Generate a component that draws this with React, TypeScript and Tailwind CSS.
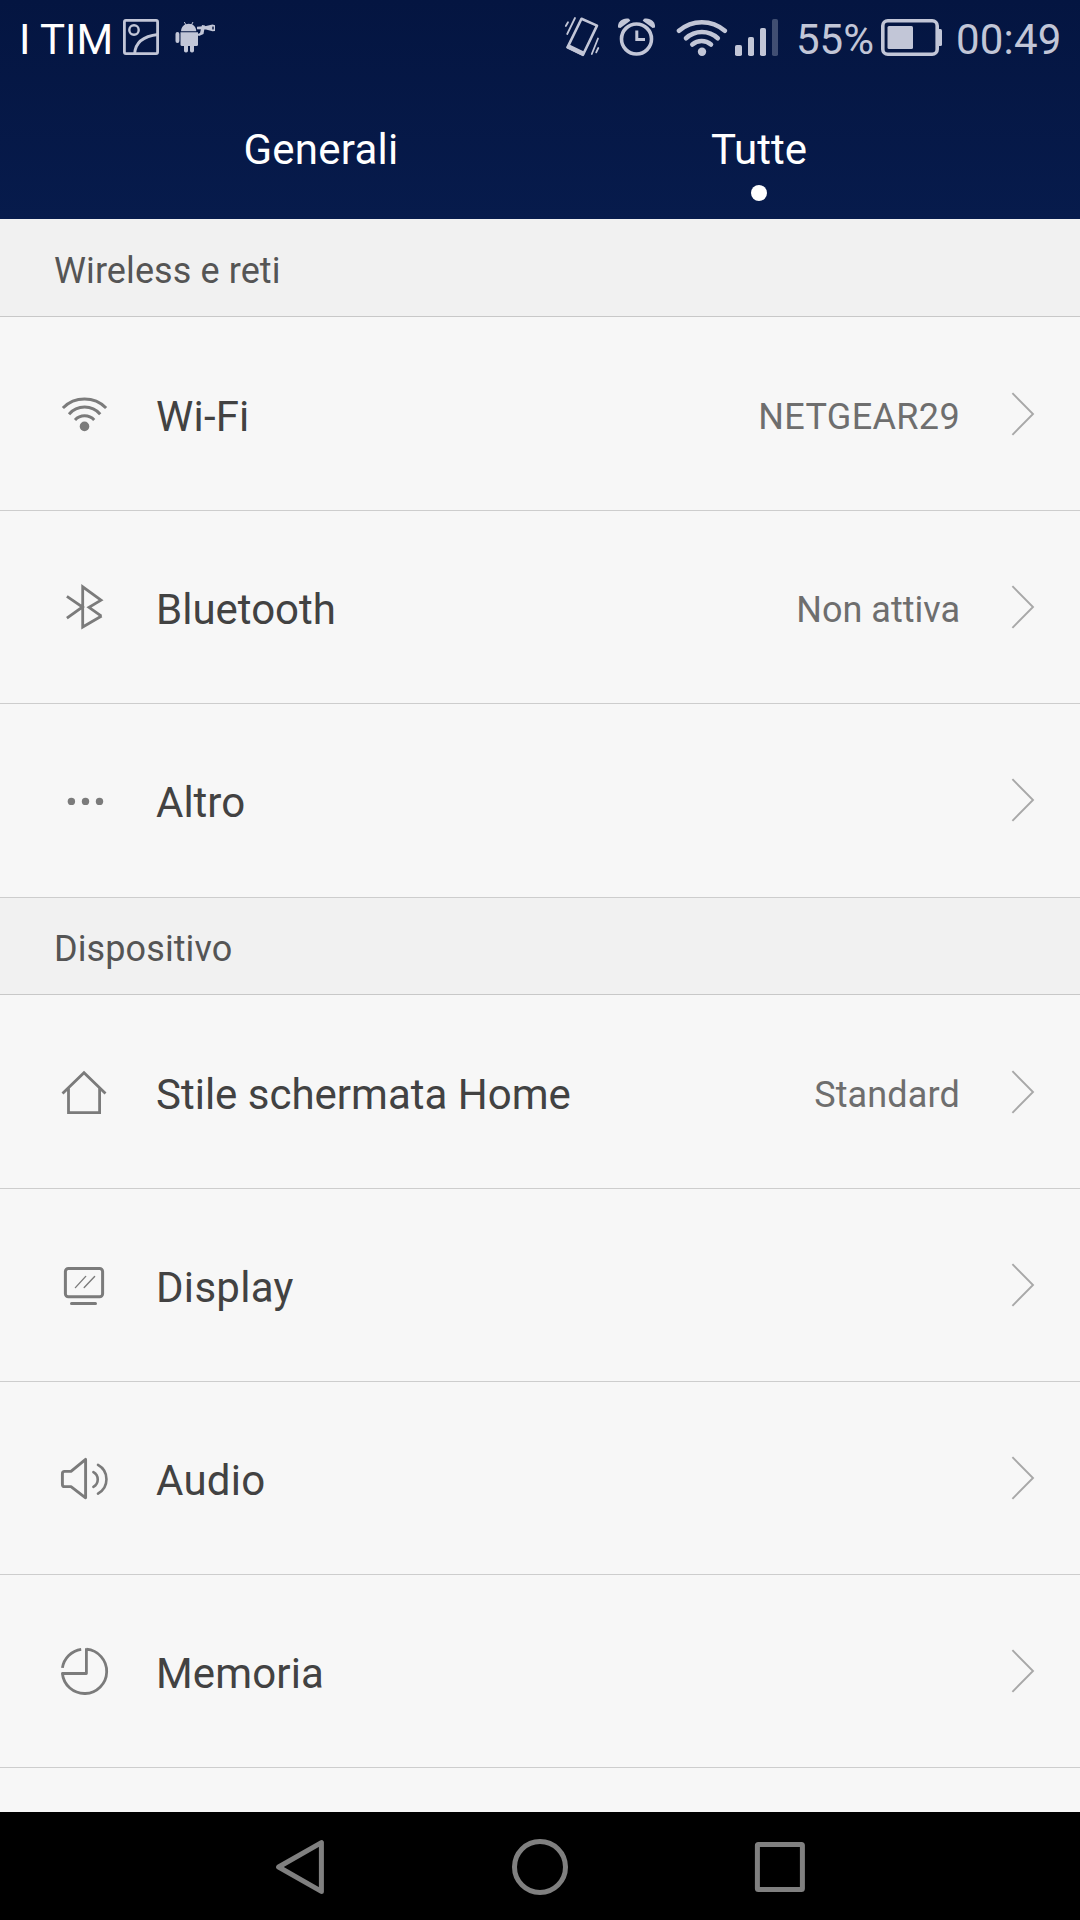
import type { ReactNode } from "react";

const stroke = {
  fill: "none",
  stroke: "currentColor",
  strokeWidth: 3,
  strokeLinecap: "round",
  strokeLinejoin: "round",
} as const;

function RowIcon({ children }: { children: ReactNode }) {
  return (
    <svg viewBox="0 0 48 48" className="mt-[73px] h-12 w-12 shrink-0 overflow-visible text-[#7b7b7b]">
      {children}
    </svg>
  );
}

const icons = {
  wifi: (
    <RowIcon>
      <g {...stroke} strokeLinecap="butt">
        <path d="M2.9 18A30.7 30.7 0 0 1 46.1 18" />
        <path d="M9 24.2A20.6 20.6 0 0 1 40.2 24.2" />
        <path d="M15 30A13.2 13.2 0 0 1 34.2 30" />
      </g>
      <circle cx="24.5" cy="36.4" r="4.8" fill="currentColor" />
    </RowIcon>
  ),
  bluetooth: (
    <RowIcon>
      <path {...stroke} strokeWidth={2.8} strokeLinecap="butt" strokeLinejoin="miter" d="M6.9 12.3L22.5 23L6.9 34.2M41.6 32L22.7 43V2.8L41 16.2L29 23.4L41.4 32.2" />
    </RowIcon>
  ),
  more: (
    <RowIcon>
      <g fill="currentColor">
        <circle cx="11.4" cy="24.4" r="3.7" />
        <circle cx="25.5" cy="24.4" r="3.7" />
        <circle cx="39.5" cy="24.4" r="3.7" />
      </g>
    </RowIcon>
  ),
  home: (
    <RowIcon>
      <path {...stroke} strokeWidth={2.8} strokeLinecap="butt" strokeLinejoin="miter" d="M2.5 25.6L24 4.8L45.5 25.6M8.5 20.5V44.6H39.6V20.5" />
    </RowIcon>
  ),
  display: (
    <RowIcon>
      <rect {...stroke} x="5.4" y="6.5" width="37.2" height="28.2" rx="3" />
      <path {...stroke} strokeWidth={1.4} d="M15.4 25.6L25.7 14.4M24.2 25.6L34.6 14.4" />
      <path {...stroke} d="M11.5 41.6H35.5" />
    </RowIcon>
  ),
  audio: (
    <RowIcon>
      <path {...stroke} strokeWidth={2.9} d="M4.6 16.4H11L25.6 4.4V42.8L11 31.6H4.6Q2.4 31.6 2.4 29.4V18.6Q2.4 16.4 4.6 16.4Z" />
      <path {...stroke} strokeWidth={2.6} d="M33.4 17.1A8.4 8.4 0 0 1 33.4 31.8M38 9.9A16.4 16.4 0 0 1 38 38.6" />
    </RowIcon>
  ),
  storage: (
    <RowIcon>
      <path {...stroke} strokeWidth={2.8} strokeLinecap="butt" d="M26.5 1.2A22.2 22.2 0 1 1 2.4 25.5H26.4V0.2M2.4 19.9A22.2 22.2 0 0 1 21.2 1.3" />
    </RowIcon>
  ),
};

type RowProps = {
  icon: ReactNode;
  label: string;
  value?: string;
  height: string;
  /** First rows of a section sit one pixel lower than the rows that follow. */
  first?: boolean;
  labelTracking?: string;
  valueTracking?: string;
};

function Row({ icon, label, value, height, first, labelTracking = "", valueTracking = "" }: RowProps) {
  const textTop = first ? "mt-[76px]" : "mt-[75px]";
  const arrowTop = first ? "mt-[73px]" : "mt-[72px]";
  return (
    <div className={`flex w-full shrink-0 items-start border-b border-[#cdcdcd] pl-[60px] pr-[44px] ${height}`}>
      {icon}
      <span className={`ml-[48px] flex-1 whitespace-nowrap text-[42px] leading-[48px] text-[#424242] ${textTop} ${labelTracking}`}>
        {label}
      </span>
      {value && (
        <span className={`whitespace-nowrap text-[36px] leading-[48px] text-[#6e6e6e] ${textTop} ${valueTracking}`}>{value}</span>
      )}
      <svg viewBox="0 0 26 48" className={`ml-[50px] h-12 w-[26px] shrink-0 text-[#a8a8a8] ${arrowTop}`}>
        <path {...stroke} strokeWidth={1.9} strokeLinecap="butt" strokeLinejoin="miter" d="M2.4 3.2L23 24L2.4 44.8" />
      </svg>
    </div>
  );
}

function Section({ title, height, textTop }: { title: string; height: string; textTop: string }) {
  return (
    <div className={`flex w-full shrink-0 items-start border-b border-[#c8c8c8] bg-[#f1f1f1] pl-[54px] ${height}`}>
      <span className={`text-[36px] leading-[48px] tracking-[0.1px] text-[#555555] ${textTop}`}>{title}</span>
    </div>
  );
}

function StatusBar() {
  return (
    <div className="flex h-[76px] items-start text-[42px] leading-[48px] text-[#c2c6d7]">
      <span className="ml-[19px] mt-4 w-[104px] whitespace-nowrap text-white">I TIM</span>
      <svg viewBox="123 19 36 36" className="mt-[19px] h-9 w-9" fill="none" stroke="currentColor" strokeWidth="2.8">
        <rect x="124.4" y="20.4" width="33.2" height="33.2" rx="1.5" />
        <circle cx="134" cy="30" r="4.7" strokeWidth="2.4" />
        <path d="M134.6 54Q135.5 37 158 34.5" />
      </svg>
      <svg viewBox="175 20 42 36" className="ml-[16px] mt-[20px] h-9 w-[42px]" fill="currentColor">
        <path d="M181 31.2C181.3 26.5 184.5 23.8 188.7 23.8C192.9 23.8 196 26.5 196.3 31.2Z" />
        <path d="M184.3 22L186.2 25.4M193 22L191.2 25.4" stroke="currentColor" strokeWidth="1" />
        <path d="M180.5 32.2H198V44.5Q198 46 196.5 46H182Q180.5 46 180.5 44.5Z" />
        <rect x="175.5" y="32" width="3.9" height="11" rx="1.9" />
        <rect x="184" y="43" width="4" height="9.5" rx="1.8" />
        <rect x="190" y="43" width="4" height="9.5" rx="1.8" />
        <path d="M196.5 34.5L200 33L202 25L205 25.5L203.5 34L199 36Z" />
        <path d="M197 26.8L206 26L212.5 24.5L215 25.2V31L212.5 31.3L206 29.6L197 29.3Z" />
        <ellipse cx="213" cy="28" rx="0.8" ry="1.8" fill="#061642" />
      </svg>
      <svg viewBox="564 16 38 42" className="ml-[347px] mt-[16px] h-[42px] w-[38px]" fill="none" stroke="currentColor" strokeLinecap="round" strokeLinejoin="round">
        <path d="M581.5 18.8L597 25.6L583 54.8L567.5 47.4Z" strokeWidth="2.6" />
        <path d="M567.5 47.4L569 45.5L583.5 52.5L583 54.8Z" fill="currentColor" strokeWidth="2" />
        <path d="M575 18L567.2 34M568 22.2L565.8 26M591.8 54L598 38.5M596.2 52.4L598.3 48" strokeWidth="1.8" />
      </svg>
      <svg viewBox="616 16 42 42" className="ml-[14px] mt-[16px] h-[42px] w-[42px]" fill="none" stroke="currentColor">
        <circle cx="636.5" cy="39" r="15" strokeWidth="3.6" />
        <path d="M636.8 30.5V39.5H645" strokeWidth="3" />
        <path d="M618 27.5C617.4 21.5 623 17.5 629 18.8L630.3 20.8L620.4 28Z" fill="currentColor" stroke="none" />
        <path d="M655 27.5C655.6 21.5 650 17.5 644 18.8L642.7 20.8L652.6 28Z" fill="currentColor" stroke="none" />
      </svg>
      <svg viewBox="676 16 52 42" className="ml-[18px] mt-[16px] h-[42px] w-[52px]" fill="none" stroke="currentColor" strokeWidth="4.6" strokeLinecap="round">
        <path d="M679 30.8A35 35 0 0 1 724.8 30.8" />
        <path d="M686 38.2A23.5 23.5 0 0 1 717.8 38.2" />
        <path d="M692.3 44.5A14.3 14.3 0 0 1 711 44.5" />
        <circle cx="702" cy="51.8" r="4.2" fill="currentColor" stroke="none" />
      </svg>
      <svg viewBox="735 18 44 38" className="ml-[7px] mt-[18px] h-[38px] w-[44px]" fill="currentColor">
        <rect x="735" y="45" width="7" height="11" rx="1.8" />
        <rect x="748" y="37" width="6" height="19" rx="1.8" />
        <rect x="760" y="28" width="6" height="28" rx="1.8" />
        <rect x="772" y="19" width="6" height="37" rx="1.8" fillOpacity="0.32" />
      </svg>
      <span className="ml-[17px] mt-4 w-[85px] whitespace-nowrap">55%</span>
      <svg viewBox="881 19 62 37" className="mt-[19px] h-[37px] w-[62px]" fill="currentColor">
        <rect x="882.8" y="20.8" width="54.4" height="33.4" rx="5" fill="none" stroke="currentColor" strokeWidth="3.6" />
        <rect x="887.5" y="26" width="25.5" height="23" rx="1.5" />
        <path d="M938 29H940.5Q942 29 942 30.5V44.5Q942 46 940.5 46H938Z" />
      </svg>
      <span className="ml-[13px] mt-4 whitespace-nowrap tracking-[0.2px]">00:49</span>
    </div>
  );
}

export default function App() {
  return (
    <div className="flex h-[1920px] w-[1080px] flex-col overflow-hidden bg-[#f7f7f7] font-['Roboto',sans-serif]">
      <header className="flex h-[219px] shrink-0 flex-col bg-gradient-to-b from-[#041541] to-[#071b4c]">
        <StatusBar />
        <nav className="flex flex-1 px-[102px] text-[42px] leading-[48px] text-white">
          <div className="flex w-[438px] flex-col items-center pt-[50px] tracking-[0.25px]">Generali</div>
          <div className="flex w-[438px] flex-col items-center pt-[50px]">
            Tutte
            <i className="mt-[11px] h-4 w-4 rounded-full bg-white" />
          </div>
        </nav>
      </header>

      <main className="flex flex-1 flex-col overflow-hidden">
        <Section title="Wireless e reti" height="h-[98px]" textTop="mt-[28px]" />
        <Row first icon={icons.wifi} label="Wi-Fi" value="NETGEAR29" height="h-[194px]" labelTracking="tracking-[0.2px]" valueTracking="tracking-[0.35px]" />
        <Row icon={icons.bluetooth} label="Bluetooth" value="Non attiva" height="h-[193px]" />
        <Row icon={icons.more} label="Altro" height="h-[194px]" />
        <Section title="Dispositivo" height="h-[97px]" textTop="mt-[27px]" />
        <Row first icon={icons.home} label="Stile schermata Home" value="Standard" height="h-[194px]" valueTracking="tracking-[0.15px]" />
        <Row icon={icons.display} label="Display" height="h-[193px]" labelTracking="tracking-[0.3px]" />
        <Row icon={icons.audio} label="Audio" height="h-[193px]" labelTracking="tracking-[0.25px]" />
        <Row icon={icons.storage} label="Memoria" height="h-[193px]" labelTracking="tracking-[0.15px]" />
      </main>

      <footer className="flex h-[108px] shrink-0 items-start bg-black text-[#808080]">
        <svg viewBox="274 1837 52 60" className="ml-[274px] mt-[25px] h-[60px] w-[52px]" fill="none" stroke="currentColor" strokeWidth="5" strokeLinejoin="round">
          <path d="M278.6 1867L321.4 1842.6V1891.4Z" />
        </svg>
        <svg viewBox="511 1838 58 58" className="ml-[185px] mt-[26px] h-[58px] w-[58px]" fill="none" stroke="currentColor" strokeWidth="5">
          <circle cx="540" cy="1867" r="25.5" />
        </svg>
        <svg viewBox="754 1841 52 52" className="ml-[185px] mt-[29px] h-[52px] w-[52px]" fill="none" stroke="currentColor" strokeWidth="5" strokeLinejoin="round">
          <rect x="757.4" y="1844.4" width="45" height="45" rx="1" />
        </svg>
      </footer>
    </div>
  );
}
